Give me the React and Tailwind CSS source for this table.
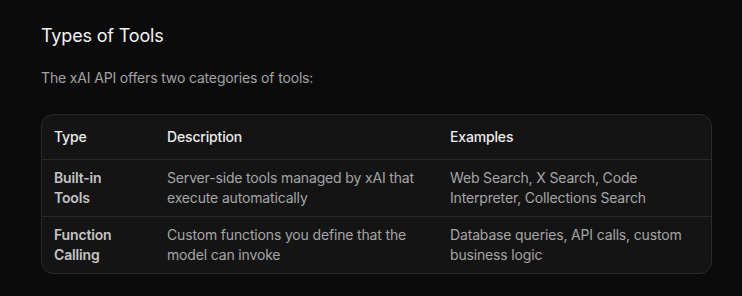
import React from 'react';

const rows = [
    {
        type: 'Built-in Tools',
        description: 'Server-side tools managed by xAI that execute automatically',
        examples: 'Web Search, X Search, Code Interpreter, Collections Search',
    },
    {
        type: 'Function Calling',
        description: 'Custom functions you define that the model can invoke',
        examples: 'Database queries, API calls, custom business logic',
    },
];

const App = () => {
    return (
        <div className="min-h-screen bg-[#0b0b0b] pl-[41px] pr-[30px] pt-[22px] font-['Inter',sans-serif] tracking-[-0.01em]">
            <h2 className="text-[18px] leading-7 text-[#f2f2f2]">Types of Tools</h2>
            <p className="mt-[18px] text-sm leading-5 text-[#a3a3a3]">The xAI API offers two categories of tools:</p>

            {/* Table */}
            <div className="mt-[26px] w-[671px] overflow-hidden rounded-xl border border-[#2a2a2a] bg-[#141414]">
                <table className="w-full table-fixed border-collapse text-left text-sm leading-5">
                    <thead>
                        <tr>
                            <th className="w-[113px] px-3 py-3 font-medium text-[#ececec]">Type</th>
                            <th className="w-[283px] px-3 py-3 font-medium text-[#ececec]">Description</th>
                            <th className="px-3 py-3 font-medium text-[#ececec]">Examples</th>
                        </tr>
                    </thead>
                    <tbody>
                        {rows.map((row) => (
                            <tr key={row.type} className="border-t border-[#2a2a2a]">
                                <td className="pl-3 pr-6 py-2 align-top font-semibold text-[#c4c4c4]">{row.type}</td>
                                <td className="px-3 py-2 align-top text-[#a6a6a6]">{row.description}</td>
                                <td className="px-3 py-2 align-top text-[#a6a6a6]">{row.examples}</td>
                            </tr>
                        ))}
                    </tbody>
                </table>
            </div>
        </div>
    );
};

export default App;
